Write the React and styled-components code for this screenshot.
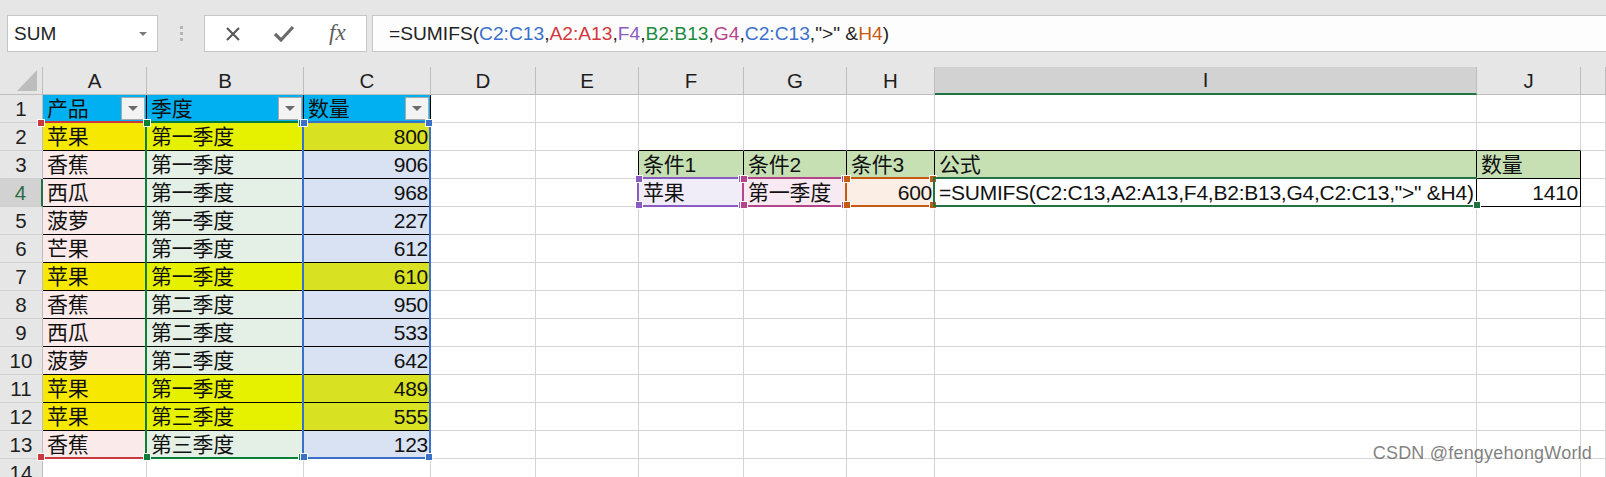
import React from 'react';
import styled, { createGlobalStyle, css } from 'styled-components';

const GlobalStyle = createGlobalStyle`
    html, body {
        margin: 0;
        padding: 0;
        background: #ffffff;
        overflow: hidden;
    }
    body {
        font-family: 'Liberation Sans', 'Noto Sans CJK SC', sans-serif;
    }
`;

const FONT = `'Liberation Sans', 'Noto Sans CJK SC', sans-serif`;

// column widths: row header, A..J (K fills the rest)
const COLS = [43, 104, 157, 127, 105, 103, 105, 103, 88, 542, 104];
const LETTERS = ['A', 'B', 'C', 'D', 'E', 'F', 'G', 'H', 'I', 'J', ''];
const HEAD_H = 28;
const ROW_H = 28;
const ROWS = 14;

const RED = '#c9393d';
const GREEN = '#0b7f35';
const BLUE = '#3a70c9';
const PURPLE = '#8a5cc2';
const MAGENTA = '#b5448b';
const ORANGE = '#c55a11';
const ACTIVE = '#217346';

const fruits = [
    ['苹果', '第一季度', 800, true],
    ['香蕉', '第一季度', 906],
    ['西瓜', '第一季度', 968],
    ['菠萝', '第一季度', 227],
    ['芒果', '第一季度', 612],
    ['苹果', '第一季度', 610, true],
    ['香蕉', '第二季度', 950],
    ['西瓜', '第二季度', 533],
    ['菠萝', '第二季度', 642],
    ['苹果', '第一季度', 489, true],
    ['苹果', '第三季度', 555, true],
    ['香蕉', '第三季度', 123],
];

const boxes = [
    { r1: 0, r2: 12, c1: 0, c2: 2 },
    { r1: 2, r2: 3, c1: 5, c2: 9 },
];
const inBox = (r, c) => boxes.some((b) => r >= b.r1 && r <= b.r2 && c >= b.c1 && c <= b.c2);

const Page = styled.div`
    width: 1606px;
    height: 477px;
    overflow: hidden;
    position: relative;
    background: #ffffff;
`;

/* ---------- toolbar ---------- */

const Toolbar = styled.div`
    height: 67px;
    box-sizing: border-box;
    background: #e6e6e6;
    display: flex;
    align-items: flex-start;
    padding: 15px 0 0 7px;
`;

const NameBox = styled.div`
    width: 151px;
    height: 37px;
    box-sizing: border-box;
    background: #ffffff;
    border: 1px solid #c6c6c6;
    display: flex;
    align-items: center;
    justify-content: space-between;
    padding: 0 10px 0 6px;
    font-family: ${FONT};
    font-size: 19px;
    color: #222;
`;

const Caret = styled.span`
    width: 0;
    height: 0;
    border-left: 4px solid transparent;
    border-right: 4px solid transparent;
    border-top: 4px solid #7a7a7a;
`;

const Grip = styled.div`
    width: 46px;
    height: 37px;
    display: flex;
    flex-direction: column;
    align-items: center;
    justify-content: center;
    gap: 3px;

    span {
        width: 3px;
        height: 3px;
        background: #b5b5b5;
    }
`;

const FxBox = styled.div`
    width: 163px;
    height: 37px;
    box-sizing: border-box;
    background: #ffffff;
    border: 1px solid #c6c6c6;
    display: flex;
    align-items: center;
    padding-left: 20px;
    gap: 32px;
`;

const FxIcon = styled.span`
    font-family: 'Liberation Serif', serif;
    font-style: italic;
    font-size: 23px;
    color: #5e5e5e;
    margin-left: 2px;
    margin-bottom: 2px;
`;

const FormulaBar = styled.div`
    flex: 1;
    height: 37px;
    margin-left: 5px;
    box-sizing: border-box;
    background: #fdfdfd;
    border-top: 1px solid #c6c6c6;
    border-bottom: 1px solid #c6c6c6;
    border-left: 1px solid #c6c6c6;
    display: flex;
    align-items: center;
    padding-left: 16px;
    font-family: ${FONT};
    font-size: 19.2px;
    color: #222;
    white-space: nowrap;
`;

const Ref = styled.span`
    color: ${(p) => p.$c};
`;

/* ---------- sheet ---------- */

const SheetWrap = styled.div`
    position: relative;
`;

const Grid = styled.div`
    display: grid;
    grid-template-columns: ${COLS.map((w) => `${w}px`).join(' ')} 1fr;
    grid-template-rows: ${HEAD_H}px repeat(${ROWS}, ${ROW_H}px);
    font-family: ${FONT};
`;

const Corner = styled.div`
    background: #e6e6e6;
    border-right: 1px solid #bdbdbd;
    border-bottom: 1px solid #bdbdbd;
    box-sizing: border-box;
    display: flex;
    align-items: flex-end;
    justify-content: flex-end;
    padding: 0 5px 3px 0;
`;

const ColHead = styled.div`
    box-sizing: border-box;
    background: ${(p) => (p.$sel ? '#d2d2d2' : '#e6e6e6')};
    border-right: 1px solid #bdbdbd;
    border-bottom: ${(p) => (p.$sel ? `2px solid ${ACTIVE}` : '1px solid #bdbdbd')};
    display: flex;
    align-items: flex-end;
    justify-content: center;
    font-size: 20.5px;
    line-height: 26px;
    color: #1e1e1e;
`;

const RowHead = styled.div`
    box-sizing: border-box;
    background: ${(p) => (p.$sel ? '#d2d2d2' : '#e6e6e6')};
    border-right: ${(p) => (p.$sel ? `2px solid ${ACTIVE}` : '1px solid #bdbdbd')};
    border-bottom: 1px solid #d0d0d0;
    display: flex;
    align-items: flex-end;
    justify-content: center;
    font-size: 20.5px;
    line-height: 26px;
    color: ${(p) => (p.$sel ? '#2f6b47' : '#1e1e1e')};
`;

const Cell = styled.div`
    box-sizing: border-box;
    position: relative;
    background: ${(p) => p.$fill || '#ffffff'};
    border-right: 1px solid ${(p) => p.$br || '#d4d4d4'};
    border-bottom: 1px solid ${(p) => p.$bb || '#d4d4d4'};
    display: flex;
    align-items: flex-end;
    justify-content: ${(p) => (p.$num ? 'flex-end' : 'flex-start')};
    padding: 0 2px 0 4px;
    font-size: 21px;
    letter-spacing: -0.25px;
    line-height: 27px;
    color: #111;
    white-space: nowrap;
`;

const FilterBtn = styled.span`
    position: absolute;
    right: 1px;
    bottom: 2px;
    width: 24px;
    height: 23px;
    box-sizing: border-box;
    background: #f3f3f3;
    border: 1px solid #a9a9a9;
    display: flex;
    align-items: center;
    justify-content: center;

    &::after {
        content: '';
        border-left: 5px solid transparent;
        border-right: 5px solid transparent;
        border-top: 5px solid #6b6b6b;
    }
`;

const RangeBox = styled.div`
    position: absolute;
    box-sizing: border-box;
    pointer-events: none;
    border-color: ${(p) => p.$c};
    border-style: solid;
    border-width: ${(p) => p.$w || '2px'};
`;

const cornerPos = {
    tl: css`top: -4px; left: -4px;`,
    tr: css`top: -4px; right: -4px;`,
    bl: css`bottom: -4px; left: -4px;`,
    br: css`bottom: -4px; right: -4px;`,
};

const Handle = styled.span`
    position: absolute;
    width: 6px;
    height: 6px;
    box-sizing: content-box;
    background: ${(p) => p.$c};
    border: 1px solid #ffffff;
    ${(p) => cornerPos[p.$at]}
`;

const Watermark = styled.div`
    position: absolute;
    right: 14px;
    bottom: 13px;
    font-family: ${FONT};
    font-size: 18px;
    color: rgba(95, 95, 95, 0.8);
    letter-spacing: 0.2px;
`;

/* ---------- helpers ---------- */

const colLeft = (c) => COLS.slice(0, c + 1).reduce((a, b) => a + b, 0);
const rowTop = (r) => HEAD_H + r * ROW_H;

const rangeStyle = (r1, r2, c1, c2) => {
    const x1 = colLeft(c1) - 2;
    const x2 = colLeft(c2 + 1);
    const y1 = rowTop(r1) - 2;
    const y2 = rowTop(r2 + 1);
    return { left: x1, top: y1, width: x2 - x1, height: y2 - y1 };
};

const Range = ({ r1, r2, c1, c2, color, w, handles = ['tl', 'tr', 'bl', 'br'] }) => (
    <RangeBox $c={color} $w={w} style={rangeStyle(r1, r2, c1, c2)}>
        {handles.map((h) => (
            <Handle key={h} $c={color} $at={h} />
        ))}
    </RangeBox>
);

const cellFill = (r, c) => {
    if (r === 0 && c <= 2) return '#00b0f0';
    if (r >= 1 && r <= 12 && c <= 2) {
        const hl = fruits[r - 1][3];
        if (c === 0) return hl ? '#f6e800' : '#faeaea';
        if (c === 1) return hl ? '#e6f100' : '#e4f0e6';
        return hl ? '#d8e222' : '#d9e2f3';
    }
    if (r === 2 && c >= 5 && c <= 9) return '#c6e0b4';
    if (r === 3) {
        if (c === 5) return '#f0ecf8';
        if (c === 6) return '#f8eaf2';
        if (c === 7) return '#fbeee4';
    }
    return null;
};

const cellContent = (r, c) => {
    if (r === 0) {
        const heads = ['产品', '季度', '数量'];
        if (c <= 2) return { text: heads[c], filter: true };
    }
    if (r >= 1 && r <= 12 && c <= 2) {
        const row = fruits[r - 1];
        return { text: row[c], num: c === 2 };
    }
    if (r === 2) {
        const heads = { 5: '条件1', 6: '条件2', 7: '条件3', 8: '公式', 9: '数量' };
        if (heads[c]) return { text: heads[c] };
    }
    if (r === 3) {
        if (c === 5) return { text: '苹果' };
        if (c === 6) return { text: '第一季度' };
        if (c === 7) return { text: 600, num: true };
        if (c === 8) return { text: '=SUMIFS(C2:C13,A2:A13,F4,B2:B13,G4,C2:C13,">" &H4)' };
        if (c === 9) return { text: 1410, num: true };
    }
    return null;
};

const Sheet = () => {
    const cells = [];
    for (let r = 0; r < ROWS; r++) {
        cells.push(
            <RowHead key={`h${r}`} $sel={r === 3}>
                {r + 1}
            </RowHead>
        );
        for (let c = 0; c < LETTERS.length; c++) {
            const content = cellContent(r, c);
            const br = inBox(r, c) || inBox(r, c + 1) ? '#000' : null;
            const bb = inBox(r, c) || inBox(r + 1, c) ? '#000' : null;
            cells.push(
                <Cell
                    key={`${r}-${c}`}
                    $fill={cellFill(r, c)}
                    $br={br}
                    $bb={bb}
                    $num={content && content.num}
                >
                    {content && content.text}
                    {content && content.filter && <FilterBtn />}
                </Cell>
            );
        }
    }

    return (
        <SheetWrap>
            <Grid>
                <Corner>
                    <svg width="20" height="21" viewBox="0 0 20 21">
                        <polygon points="0,21 20,21 20,0" fill="#bdbdbd" />
                    </svg>
                </Corner>
                {LETTERS.map((l, i) => (
                    <ColHead key={i} $sel={l === 'I'}>
                        {l}
                    </ColHead>
                ))}
                {cells}
            </Grid>

            {/* reference outlines from the formula being edited */}
            <Range r1={1} r2={12} c1={0} c2={0} color={RED} w="2px 0 2px 0" handles={['tl', 'bl']} />
            <Range r1={1} r2={12} c1={1} c2={1} color={GREEN} />
            <Range r1={1} r2={12} c1={2} c2={2} color={BLUE} />
            <Range r1={3} r2={3} c1={5} c2={5} color={PURPLE} />
            <Range r1={3} r2={3} c1={6} c2={6} color={MAGENTA} />
            <Range r1={3} r2={3} c1={7} c2={7} color={ORANGE} />
            <Range r1={3} r2={3} c1={8} c2={8} color={ACTIVE} w="2px 0 2px 2px" handles={['br']} />
        </SheetWrap>
    );
};

const App = () => {
    return (
        <Page>
            <GlobalStyle />
            <Toolbar>
                <NameBox>
                    SUM
                    <Caret />
                </NameBox>
                <Grip>
                    <span />
                    <span />
                    <span />
                </Grip>
                <FxBox>
                    <svg width="16" height="16" viewBox="0 0 16 16">
                        <path d="M2 2 L14 14 M14 2 L2 14" stroke="#5a5a5a" strokeWidth="2.2" />
                    </svg>
                    <svg width="22" height="18" viewBox="0 0 22 18">
                        <path d="M2 9 L8 15 L20 2" stroke="#6a6a6a" strokeWidth="3.2" fill="none" />
                    </svg>
                    <FxIcon>fx</FxIcon>
                </FxBox>
                <FormulaBar>
                    =SUMIFS(
                    <Ref $c={BLUE}>C2:C13</Ref>,<Ref $c="#d3373c">A2:A13</Ref>,<Ref $c={PURPLE}>F4</Ref>,
                    <Ref $c="#1e8a3c">B2:B13</Ref>,<Ref $c={MAGENTA}>G4</Ref>,<Ref $c={BLUE}>C2:C13</Ref>
                    ,"&gt;" &amp;<Ref $c={ORANGE}>H4</Ref>)
                </FormulaBar>
            </Toolbar>
            <Sheet />
            <Watermark>CSDN @fengyehongWorld</Watermark>
        </Page>
    );
};

export default App;
